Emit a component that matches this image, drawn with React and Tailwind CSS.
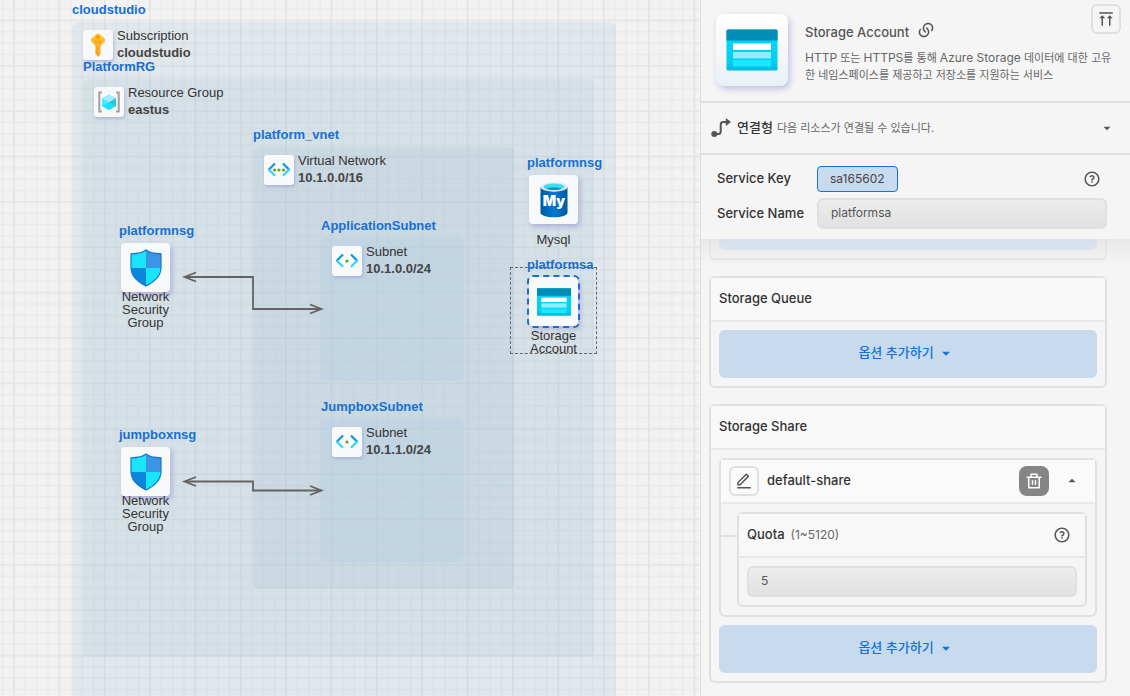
import React from "react";
import {
  RiAlignTop,
  RiArrowDownSFill,
  RiArrowUpSFill,
  RiDeleteBinLine,
  RiEditLine,
  RiLinksLine,
  RiQuestionLine,
} from "react-icons/ri";

/* ---------- service icons ---------- */

function KeyIcon() {
  return (
    <svg viewBox="0 0 24 24" className="size-6" aria-hidden="true">
      <defs>
        <linearGradient id="keyFill" x1="0" y1="0" x2="0" y2="1">
          <stop offset="0" stopColor="#fec82f" />
          <stop offset="1" stopColor="#f9a72c" />
        </linearGradient>
      </defs>
      <path
        d="M10.200 1.200c1-.9 2.600-.9 3.600 0l4.600 4.100c1 .9 1 2.400.1 3.400l-3.200 3.600c-.3.3-.4.600-.4 1v.9l-1 1 1.100 1.100-1.100 1.100 1.100 1.100-1.100 1.100 1.100 1.100-2.300 2.500c-.4.4-.8.4-1.200 0l-2.100-2.100v-7.800c0-.4-.1-.7-.4-1L5.500 8.700c-.9-1-.9-2.500.1-3.400z"
        fill="url(#keyFill)"
      />
      <circle cx="12" cy="4" r="1.700" fill="#ff9300" />
      <path d="M11.200 13v7.200" stroke="#ff9300" strokeWidth="1" />
      <path d="M8.300 8.200h7.400M8.300 9.800h7.400" stroke="#ff9300" strokeWidth=".8" />
    </svg>
  );
}

function ResourceGroupIcon() {
  return (
    <svg viewBox="0 0 24 24" className="size-6" aria-hidden="true">
      <path d="M5 2.500H2.300V21.500H5M19 2.500h2.700V21.500H19" fill="none" stroke="#a0a0a0" strokeWidth="2" />
      <path d="M12 4.200l7 3.900-7 4.100-7-4.100z" fill="#9cebff" />
      <path d="M5 8.100v7.900l7 4v-7.800z" fill="#50e6ff" />
      <path d="M19 8.100v7.900L12 20v-7.800z" fill="#32bedd" />
      <path d="M5 16l7-3.800L19 16l-7 4z" fill="#1ae0f8" />
    </svg>
  );
}

function NetworkIcon({ dots }) {
  return (
    <svg viewBox="0 0 24 24" className="size-6" aria-hidden="true">
      <g fill="none" strokeWidth="2.200">
        <path d="M8 5.500L1.500 12" stroke="#1490df" />
        <path d="M1.500 11.300L8 17.800" stroke="#32d4f5" />
        <path d="M16 5.500l6.500 6.500" stroke="#1490df" />
        <path d="M22.500 11.300L16 17.800" stroke="#32d4f5" />
      </g>
      {dots.map((x) => (
        <circle key={x} cx={x} cy="12" r="1.600" fill="#5ea91c" />
      ))}
    </svg>
  );
}

function ShieldIcon() {
  return (
    <svg viewBox="0 0 38 38" className="size-[38px]" aria-hidden="true">
      <defs>
        <clipPath id="shieldShape">
          <path d="M19 1C15 4.500 10 4.700 4 4.800V18.500C4 27.500 12 33.500 19 37C26 33.500 34 27.500 34 18.500V4.800C28 4.700 23 4.500 19 1Z" />
        </clipPath>
      </defs>
      <g clipPath="url(#shieldShape)">
        <path d="M0 0h38v38H0z" fill="#1ae5ff" />
        <path d="M19 0h19v19H19z" fill="#3c94e4" />
        <path d="M0 19h19v19H0z" fill="#0a86dc" />
      </g>
      <path
        d="M19 1C15 4.500 10 4.700 4 4.800V18.500C4 27.500 12 33.500 19 37C26 33.500 34 27.500 34 18.500V4.800C28 4.700 23 4.500 19 1Z"
        fill="none"
        stroke="#1478cf"
        strokeWidth="1.200"
      />
    </svg>
  );
}

function MysqlIcon() {
  return (
    <svg viewBox="0 0 38 38" className="size-[38px]" aria-hidden="true">
      <defs>
        <linearGradient id="dbBody" x1="0" x2="1">
          <stop offset="0" stopColor="#005ba1" />
          <stop offset=".5" stopColor="#0078d4" />
          <stop offset="1" stopColor="#005ba1" />
        </linearGradient>
      </defs>
      <path d="M5.500 6v25.500c0 2.700 6 4.800 13.500 4.800s13.500-2.100 13.500-4.800V6z" fill="url(#dbBody)" />
      <ellipse cx="19" cy="6" rx="13.500" ry="4.700" fill="#e8e8e8" />
      <ellipse cx="19" cy="5.800" rx="10.500" ry="3.200" fill="#35e1f8" />
      <path d="M11 7.800c4-1.700 12-1.700 16 0-4 1.700-12 1.700-16 0z" fill="#198ab3" />
      <text x="19" y="25" textAnchor="middle" fill="#fff" fontSize="14" fontWeight="900" fontFamily="Inter, sans-serif">
        My
      </text>
    </svg>
  );
}

function StorageIcon({ className }) {
  return (
    <svg viewBox="0 0 52 42" className={className} aria-hidden="true">
      <defs>
        <linearGradient id="storageBody" x1="0" y1="0" x2="0" y2="1">
          <stop offset="0" stopColor="#00d8f8" />
          <stop offset=".8" stopColor="#00d0f0" />
          <stop offset="1" stopColor="#00b8dc" />
        </linearGradient>
      </defs>
      <rect x=".5" y=".5" width="51" height="41" rx="1.500" fill="url(#storageBody)" />
      <path d="M2 .5h48a1.500 1.500 0 0 1 1.500 1.500v9.500H.5V2A1.500 1.500 0 0 1 2 .5z" fill="#008cb4" />
      <rect x="7" y="14.500" width="38" height="6.500" fill="#fff" />
      <rect x="7" y="23" width="38" height="6.500" fill="#8eedff" />
      <rect x="7" y="31" width="38" height="6.500" fill="#1ae8ff" />
    </svg>
  );
}

function ConnectIcon() {
  return (
    <svg viewBox="0 0 20 20" className="size-5 shrink-0" aria-hidden="true">
      <path d="M3 16h4.200a2.500 2.500 0 0 0 2.500-2.500v-7A2.500 2.500 0 0 1 12.200 4H16" fill="none" stroke="#555" strokeWidth="2" />
      <circle cx="3.300" cy="16" r="3" fill="#555" />
      <path d="M14.800 0L20 4l-5.200 4z" fill="#555" />
    </svg>
  );
}

/* ---------- diagram ---------- */

function Grid() {
  return (
    <svg className="absolute inset-0 size-full" aria-hidden="true">
      <defs>
        <pattern id="grid" width="40" height="40" patternUnits="userSpaceOnUse" patternTransform="translate(14 20.500) scale(1.134)">
          <path d="M10 0V40M20 0V40M30 0V40M0 10H40M0 20H40M0 30H40" stroke="#e8e9e9" strokeWidth="1.200" />
          <path d="M0 0V40M40 0V40M0 0H40M0 40H40" stroke="#e3e4e4" strokeWidth="1.500" />
        </pattern>
      </defs>
      <rect width="100%" height="100%" fill="url(#grid)" />
    </svg>
  );
}

function Connectors() {
  return (
    <svg className="absolute inset-0 size-full" aria-hidden="true">
      <g fill="none" stroke="#636363" strokeWidth="1.800">
        <path d="M185 277H253V309H321" />
        <path d="M196 272.500L184.500 277L196 281.500M310 304.500L321.500 309L310 313.500" />
        <path d="M185 481.500H253V490.500H321" />
        <path d="M196 477L184.500 481.500L196 486M310 486L321.500 490.500L310 495" />
      </g>
    </svg>
  );
}

function Group({ name, label, value, icon, position, shade }) {
  return (
    <section className={`absolute ${position}`}>
      <h3 className="absolute left-0 -top-5 text-[13px] leading-4 font-bold whitespace-nowrap text-[#176fd4]">{name}</h3>
      <div className={`h-full rounded-md ${shade}`}>
        <div className="flex gap-1 pt-2 pl-[11px]">
          <span className="flex size-[30px] shrink-0 items-center justify-center rounded-[3px] bg-[#f8f9fa] shadow-[1px_2px_3px_rgba(150,160,215,0.6)]">
            {icon}
          </span>
          <p className="-mt-[3px] text-[13px] leading-[17px] whitespace-nowrap text-[#333]">
            {label}
            <strong className="block text-[#444]">{value}</strong>
          </p>
        </div>
      </div>
    </section>
  );
}

function Node({ name, label, icon, position, labelClass = "", selected = false }) {
  return (
    <figure className={`absolute w-[49px] ${position}`}>
      {selected && <span className="absolute -top-2.5 -left-[19px] h-[87px] w-[87px] border border-dashed border-[#666]" />}
      <h3 className="absolute -left-0.5 -top-5 text-[13px] leading-4 font-bold whitespace-nowrap text-[#176fd4]">{name}</h3>
      <span
        className={`relative flex size-[49px] items-center justify-center rounded bg-[#f8f9fa] shadow-[2px_3px_5px_rgba(150,150,215,0.6)] ${
          selected ? "outline-2 outline-dashed outline-[#176fd4]" : ""
        }`}
      >
        {icon}
      </span>
      <figcaption className={`relative text-center text-[13px] leading-[13px] text-[#333] ${labelClass}`}>{label}</figcaption>
    </figure>
  );
}

function Diagram() {
  return (
    <main className="relative min-w-0 flex-1 overflow-hidden bg-[#f2f2f2] font-['Liberation_Sans',Arial,sans-serif]">
      <Grid />
      <Group name="cloudstudio" label="Subscription" value="cloudstudio" icon={<KeyIcon />} position="left-[72px] top-[22px] h-[760px] w-[544px]" shade="bg-[#a2c0d4]/20" />
      <Group name="PlatformRG" label="Resource Group" value="eastus" icon={<ResourceGroupIcon />} position="left-[83px] top-[79px] h-[578px] w-[511px]" shade="bg-[#abcad8]/20" />
      <Group name="platform_vnet" label="Virtual Network" value="10.1.0.0/16" icon={<NetworkIcon dots={[7.500, 12, 16.500]} />} position="left-[253px] top-[147px] h-[442px] w-[261px]" shade="bg-[#a0bfd4]/20" />
      <Group name="ApplicationSubnet" label="Subnet" value="10.1.0.0/24" icon={<NetworkIcon dots={[12]} />} position="left-[321px] top-[238px] h-[143px] w-[143px]" shade="bg-[#a4c7e4]/20" />
      <Group name="JumpboxSubnet" label="Subnet" value="10.1.1.0/24" icon={<NetworkIcon dots={[12]} />} position="left-[321px] top-[419px] h-[143px] w-[143px]" shade="bg-[#a4c7e4]/20" />
      <Connectors />
      <Node name="platformnsg" label="Network Security Group" icon={<ShieldIcon />} position="left-[121px] top-[243px]" labelClass="-mt-0.5" />
      <Node name="jumpboxnsg" label="Network Security Group" icon={<ShieldIcon />} position="left-[121px] top-[447px]" labelClass="-mt-0.5" />
      <Node name="platformnsg" label="Mysql" icon={<MysqlIcon />} position="left-[529px] top-[175px]" labelClass="mt-[9px]" />
      <Node name="platformsa" label="Storage Account" icon={<StorageIcon className="h-7 w-9" />} position="left-[529px] top-[277px]" labelClass="mt-[3px]" selected />
    </main>
  );
}

/* ---------- properties panel ---------- */

const field =
  "h-[31px] w-full min-w-0 rounded-md border-2 border-[#dfdfdf] bg-linear-to-b from-[#ededed] to-[#e1e1e1] px-3 pb-0.5 text-xs text-[#555] outline-none";

function Card({ title, children }) {
  return (
    <section className="shrink-0 rounded-md border-2 border-[#e0e0e0]">
      <h2 className="flex h-11 items-center border-b-2 border-[#e9e9e9] bg-[#f8f8f8] px-2 text-[13px] font-medium">{title}</h2>
      <div className="flex flex-col gap-2 p-2">{children}</div>
    </section>
  );
}

function AddOption() {
  return (
    <button type="button" className="flex h-12 w-full items-center justify-center gap-1 rounded-md bg-[#c8daee] pr-1 pb-0.5 text-[13px] font-medium text-[#1272d6]">
      옵션 추가하기
      <RiArrowDownSFill className="size-4" />
    </button>
  );
}

function Help() {
  return (
    <button type="button" aria-label="Help" className="text-[#555]">
      <RiQuestionLine className="size-[18px]" />
    </button>
  );
}

function Panel() {
  return (
    <aside className="flex w-[430px] shrink-0 flex-col border-l border-[#dedede] bg-[#f5f5f5] font-['Inter','Noto_Sans_CJK_KR',sans-serif] text-[#333]">
      <header className="flex gap-[17px] border-b-2 border-[#dfdfdf] pt-3.5 pr-[9px] pb-[15px] pl-[15px]">
        <span className="flex size-[72px] shrink-0 items-center justify-center rounded-lg bg-linear-to-b from-white via-[#f7f7f7] to-[#e7f1f6] shadow-[2px_3px_6px_rgba(150,150,215,0.55)]">
          <StorageIcon className="h-[42px] w-[52px]" />
        </span>
        <div className="min-w-0 flex-1 pt-2">
          <h1 className="flex items-center gap-2 text-[13px] leading-5 font-medium text-[#555]">
            Storage Account
            <RiLinksLine className="-mt-1 size-[18px]" />
          </h1>
          <p className="mt-2 -mr-2 text-[11px] leading-[17px] text-[#666]">
            <span className="text-xs">HTTP</span> 또는 <span className="text-xs">HTTPS</span>를 통해{" "}
            <span className="text-xs">Azure Storage</span> 데이터에 대한 고유
            <wbr />한 네임스페이스를 제공하고 저장소를 지원하는 서비스
          </p>
        </div>
        <button type="button" aria-label="Scroll to top" className="-mt-2.5 -ml-8 flex size-[30px] shrink-0 items-center justify-center rounded-md border-2 border-[#dfdfdf] text-[#555]">
          <RiAlignTop className="size-[18px]" />
        </button>
      </header>

      <button type="button" className="flex h-[52px] shrink-0 items-center border-b-2 border-[#dfdfdf] pr-4 pl-2.5 text-left">
        <ConnectIcon />
        <strong className="ml-1.5 text-[13px] font-medium">연결형</strong>
        <span className="ml-1 flex-1 text-[11px] text-[#666]">다음 리소스가 연결될 수 있습니다.</span>
        <RiArrowDownSFill className="size-3.5 text-[#555]" />
      </button>

      <form className="flex shrink-0 flex-col gap-1.5 pt-[11px] pr-[23px] pb-2.5 pl-4 text-[13px] font-medium" onSubmit={(e) => e.preventDefault()}>
        <div className="flex items-center">
          <span className="w-[100px]">Service Key</span>
          <output className="flex h-[26px] items-center rounded border border-[#1673d8] bg-[#c8daee] px-3 text-xs font-normal text-[#444]">sa165602</output>
          <span className="mr-1.5 ml-auto flex">
            <Help />
          </span>
        </div>
        <div className="flex items-center">
          <label htmlFor="service-name" className="w-[100px] shrink-0">
            Service Name
          </label>
          <input id="service-name" className={`${field} font-normal`} defaultValue="platformsa" />
        </div>
      </form>

      <div className="relative flex min-h-0 flex-1 flex-col gap-4 overflow-hidden pr-[23px] pl-2">
        <div className="pointer-events-none absolute inset-x-0 top-0 h-7 bg-linear-to-b from-[#e8e8e8] to-[#f5f5f5]/0" />
        <div className="relative shrink-0 rounded-b-md border-2 border-t-0 border-[#e0e0e0]/70 px-2 pb-2">
          <div className="h-[11px] rounded-b-md bg-[#c8daee]/50" />
        </div>
        <Card title="Storage Queue">
          <AddOption />
        </Card>
        <Card title="Storage Share">
          <div className="rounded-md border-2 border-[#e0e0e0]">
            <div className="flex h-11 items-center border-b-2 border-[#e9e9e9] bg-[#fafafa] px-2">
              <button type="button" aria-label="Edit name" className="flex size-[30px] items-center justify-center rounded-md border-2 border-[#e0e0e0] text-[#555]">
                <RiEditLine className="size-[18px]" />
              </button>
              <h3 className="ml-2 flex-1 text-[13px] font-medium">default-share</h3>
              <button type="button" aria-label="Delete" className="flex size-[30px] items-center justify-center rounded-lg bg-[#858585] text-white">
                <RiDeleteBinLine className="size-[18px]" />
              </button>
              <button type="button" aria-label="Collapse" className="mr-2 ml-4 text-[#555]">
                <RiArrowUpSFill className="size-3.5" />
              </button>
            </div>
            <div className="flex py-2 pr-2">
              <span className="mt-[23px] h-0.5 w-4 shrink-0 bg-[#e0e0e0]" />
              <div className="min-w-0 flex-1 rounded-md border-2 border-[#e0e0e0]">
                <div className="flex h-11 items-center border-b-2 border-[#e9e9e9] bg-[#f8f8f8] pr-3.5 pl-2">
                  <label htmlFor="quota" className="text-[13px] font-medium">
                    Quota
                  </label>
                  <span className="ml-1.5 flex-1 text-xs text-[#666]">(1~5120)</span>
                  <Help />
                </div>
                <div className="flex p-2">
                  <input id="quota" className={field} defaultValue="5" />
                </div>
              </div>
            </div>
          </div>
          <AddOption />
        </Card>
      </div>
    </aside>
  );
}

export default function App() {
  return (
    <div className="flex h-screen overflow-hidden">
      <Diagram />
      <Panel />
    </div>
  );
}
